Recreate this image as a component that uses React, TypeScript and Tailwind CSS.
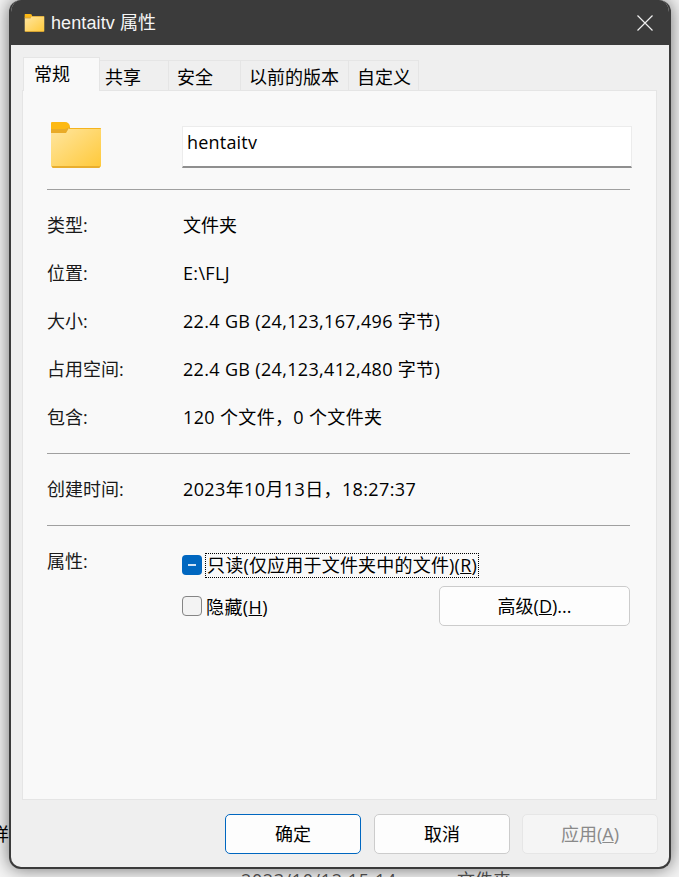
const font = "font-['Open_Sans','Noto_Sans_CJK_SC',sans-serif]";

const FolderIcon = ({ className }: { className: string }) => (
  <svg viewBox="0 0 50 46" className={className}>
    <defs>
      <linearGradient id="folderFill" x1="0" y1="0" x2="1" y2="1">
        <stop offset="0" stopColor="#ffe6a0" />
        <stop offset="1" stopColor="#ffc93a" />
      </linearGradient>
    </defs>
    <path d="M1 0h13a5 5 0 0 1 5 5v6H0V1a1 1 0 0 1 1-1z" fill="#fdb913" />
    <path d="M0 7h14l5-2v6H0z" fill="#e9ab28" />
    <path d="M0 11h15l3-5h31a1 1 0 0 1 1 1v37a1 1 0 0 1-1 1H1a1 1 0 0 1-1-1z" fill="url(#folderFill)" />
    <path d="M18 6h31a1 1 0 0 1 1 1H18z" fill="#f5b41e" />
    <path d="M1 44h48v1a1 1 0 0 1-1 1H2a1 1 0 0 1-1-1z" fill="#e9ae2e" />
  </svg>
);

const tabs = [
  { label: '共享', style: 'w-[69px] pl-[5px]' },
  { label: '安全', style: 'w-[72px] pl-[8px]' },
  { label: '以前的版本', style: 'w-[108px] pl-[8px]' },
  { label: '自定义', style: 'w-[70px] pl-[8px]' },
];

const infoRows = [
  { label: '类型:', value: '文件夹', spacing: '' },
  { label: '位置:', value: 'E:\\FLJ', spacing: 'tracking-[0.33px]' },
  { label: '大小:', value: '22.4 GB (24,123,167,496 字节)', spacing: 'tracking-[0.33px]' },
  { label: '占用空间:', value: '22.4 GB (24,123,412,480 字节)', spacing: 'tracking-[0.33px]' },
  { label: '包含:', value: '120 个文件，0 个文件夹', spacing: 'tracking-[0.35px]' },
];

const App = () => {
  return (
    <div className={`relative h-[877px] w-[679px] overflow-hidden bg-[#f4f4f4] text-[18px] leading-[24px] text-black ${font}`}>
      {/* stuff behind the dialog */}
      <span className="absolute left-[-9px] top-[822px]">详</span>
      <span className="absolute left-[241px] top-[868px] tracking-[0.6px] text-[#555]">2023/10/12 15:14</span>
      <span className="absolute left-[457px] top-[868px] text-[#555]">文件夹</span>

      <div className="relative ml-[9px] flex h-[869px] w-[662px] flex-col overflow-hidden rounded-[12px] border-2 border-t-0 border-[#3b3b3b] bg-[#efefef] shadow-[0_0_18px_rgba(0,0,0,0.55)]">
        {/* title bar */}
        <div className="flex h-[45px] shrink-0 items-center bg-[#3b3b3b] pl-[13px] pr-[16px] text-[#f5f5f5]">
          <FolderIcon className="h-[18px] w-[21px]" />
          <span className="ml-[6px] flex-1 font-['Liberation_Sans','Noto_Sans_CJK_SC',sans-serif] tracking-[0.1px]">hentaitv 属性</span>
          <svg viewBox="0 0 16 16" className="h-[16px] w-[16px]" fill="none" stroke="#f0f0f0" strokeWidth="1.2">
            <path d="M0.500 0.500L15.500 15.500M15.500 0.500L0.500 15.500" />
          </svg>
        </div>

        {/* tabs */}
        <div className="mt-[12px] flex h-[33px] shrink-0 items-end pl-[12px]">
          <div className="relative z-10 mb-[-1px] flex h-[34px] w-[77px] items-center border border-b-0 border-[#e5e5e5] bg-[#f9f9f9] pb-[1px] pl-[10px]">
            常规
          </div>
          {tabs.map((tab) => (
            <div key={tab.label} className={`flex h-[30px] items-center border border-l-0 border-b-0 border-[#e5e5e5] pt-[2px] ${tab.style}`}>
              {tab.label}
            </div>
          ))}
        </div>

        {/* panel */}
        <div className="ml-[11px] h-[710px] w-[635px] shrink-0 border border-[#e5e5e5] bg-[#f9f9f9] px-[24px]">
          <div className="flex h-[98px] items-start pt-[31px]">
            <FolderIcon className="ml-[4px] h-[46px] w-[51px]" />
            <div className="ml-[81px] mt-[4px] flex h-[42px] w-[450px] shrink-0 items-start border border-b-2 border-[#ececec] border-b-[#8f8f8f] bg-white pl-[4px] pt-[3px] tracking-[0.2px]">
              hentaitv
            </div>
          </div>
          <div className="h-px w-[583px] bg-[#a0a0a0]" />
          <div className="pt-[11px]">
            {infoRows.map((row) => (
              <div key={row.label} className="flex h-[48px] items-center">
                <span className="w-[136px] text-[#1a1a1a]">{row.label}</span>
                <span className={row.spacing}>{row.value}</span>
              </div>
            ))}
          </div>
          <div className="mt-[12px] h-px w-[583px] bg-[#a0a0a0]" />
          <div className="flex h-[71px] items-center pb-[2px]">
            <span className="w-[136px] text-[#1a1a1a]">创建时间:</span>
            <span className="tracking-[0.38px]">2023年10月13日，18:27:37</span>
          </div>
          <div className="h-px w-[583px] bg-[#a0a0a0]" />

          <div className="flex pt-[23px]">
            <span className="w-[135px] text-[#1a1a1a]">属性:</span>
            <div className="flex-1">
              <div className="mt-[3px] flex h-[26px] items-center">
                <div className="flex h-[20px] w-[20px] items-center justify-center rounded-[4px] bg-[#0067c0]">
                  <div className="h-[2px] w-[8px] bg-[#cfe2f5]" />
                </div>
                <span className="ml-[3px] border border-dotted border-black px-px leading-[23px] tracking-[0.2px]">
                  只读(仅应用于文件夹中的文件)(<span className="underline">R</span>)
                </span>
              </div>
              <div className="mt-[8px] flex items-center">
                <div className="h-[20px] w-[20px] rounded-[4px] border border-[#858585] bg-[#f3f3f3]" />
                <span className="ml-[4px] flex-1 pt-[2px] tracking-[0.4px]">
                  隐藏(<span className="underline">H</span>)
                </span>
                <button className="mr-[2px] h-[40px] w-[191px] rounded-[5px] border border-[#cccccc] bg-[#fdfdfd]">
                  高级(<span className="underline">D</span>)...
                </button>
              </div>
            </div>
          </div>
        </div>

        {/* footer buttons */}
        <div className="flex flex-1 justify-end pr-[11px] pt-[14px]">
          <button className="h-[40px] w-[136px] rounded-[5px] border border-[#0067c0] bg-[#fdfdfd]">确定</button>
          <button className="ml-[13px] h-[40px] w-[136px] rounded-[5px] border border-[#cccccc] bg-[#fdfdfd]">取消</button>
          <button className="ml-[12px] h-[40px] w-[136px] rounded-[5px] border border-[#e6e6e6] bg-[#f5f5f5] text-[#8a8a8a]">
            应用(<span className="underline">A</span>)
          </button>
        </div>
      </div>
    </div>
  );
};

export default App;
